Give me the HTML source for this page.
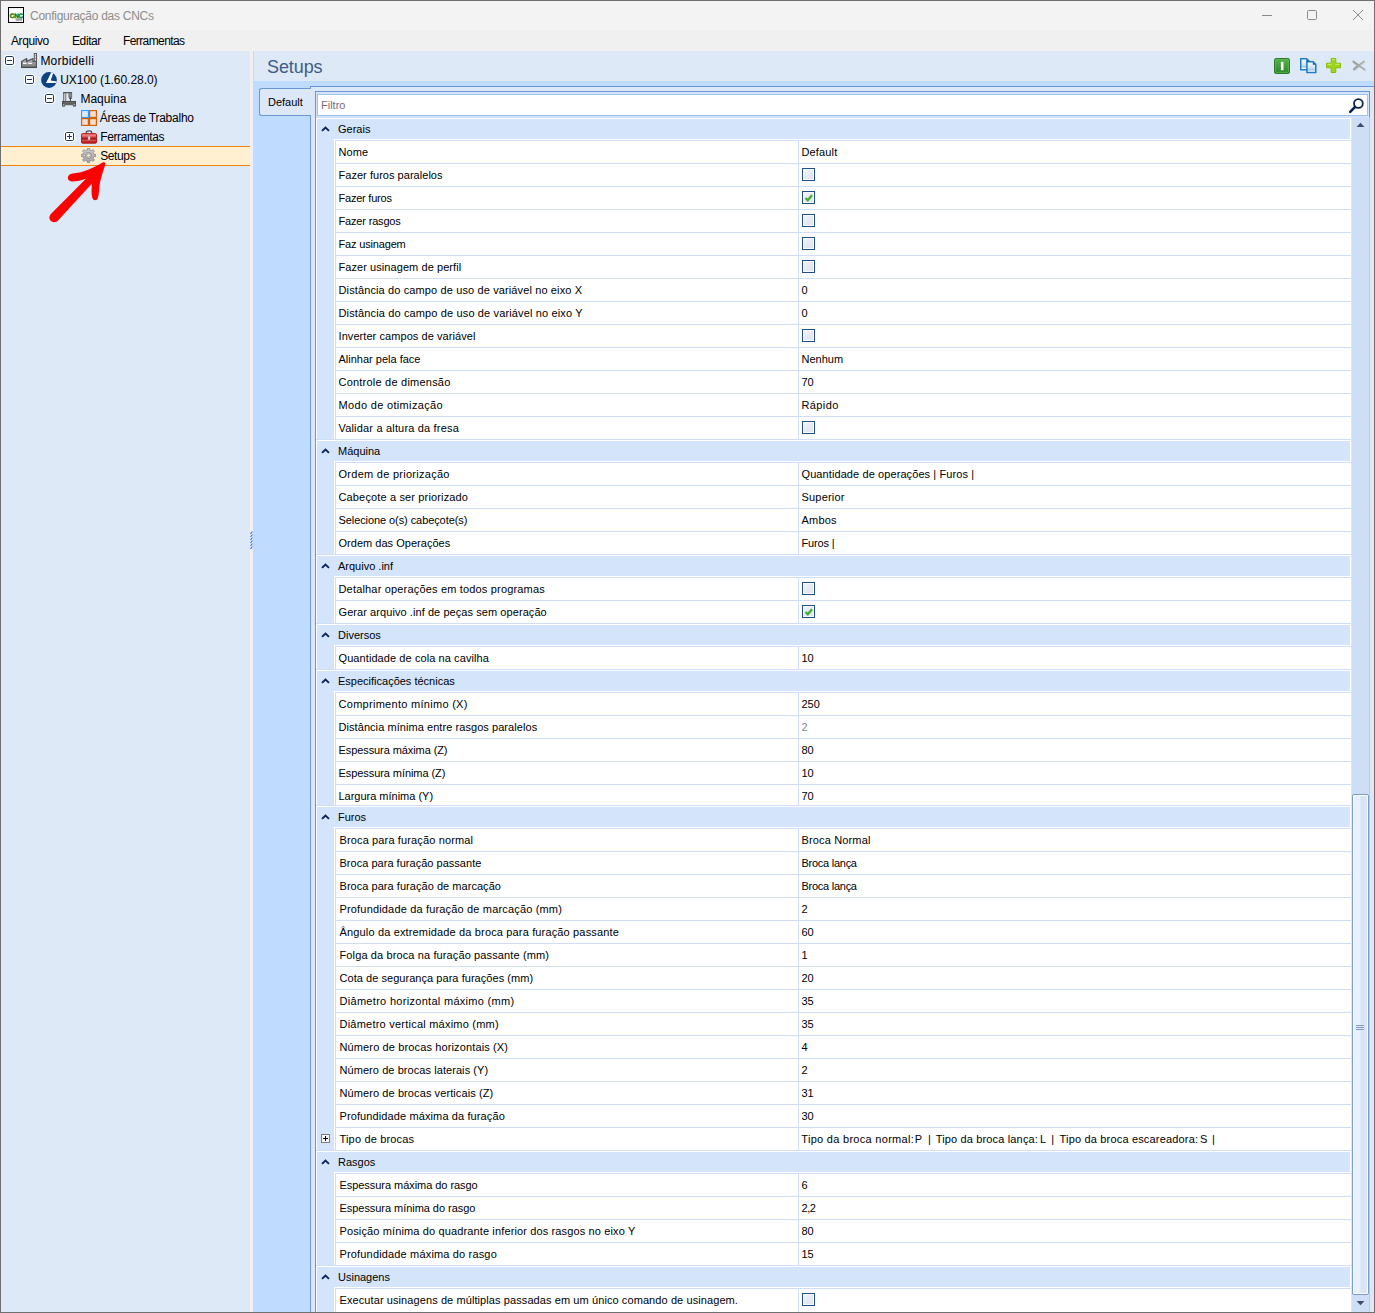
<!DOCTYPE html>
<html lang="pt-BR">
<head>
<meta charset="utf-8">
<title>Configuração das CNCs</title>
<style>
*{box-sizing:border-box;margin:0;padding:0}
html,body{width:1375px;height:1313px;overflow:hidden;background:#f0f0f0}
body{position:relative;font-family:"Liberation Sans",sans-serif;font-size:12px;color:#000}
.abs{position:absolute}
#win{position:absolute;left:0;top:0;width:1375px;height:1313px;border:1px solid #6f6f6f;}
#title{position:absolute;left:1px;top:1px;width:1373px;height:30px;background:#f3f3f3}
#title .tt{position:absolute;left:29px;top:0;line-height:30px;font-size:12px;color:#8d8d8d;letter-spacing:-0.27px;white-space:nowrap}
#menu{position:absolute;left:1px;top:31px;width:1373px;height:20px;background:#f0f0f0}
#menu span{position:absolute;top:0;line-height:21px;font-size:12px;letter-spacing:-0.4px;white-space:nowrap}
#tree{position:absolute;left:1px;top:51px;width:249px;height:1261px;background:#dde9f7}
.tn{position:absolute;left:0;width:249px;height:19px;line-height:19px;white-space:nowrap;font-size:12px}
.tn .tx{position:absolute;top:1px}
.tn svg{position:absolute}
.sel{background:#fff0d2;border-top:1px solid #f5820f;border-bottom:1px solid #f5820f;height:20px}
.sel .tx{top:0}
#split{position:absolute;left:250px;top:51px;width:3px;height:1261px;background:#f0f0f0}
#right{position:absolute;left:253px;top:51px;width:1121px;height:1261px;background:#bfdbff}
#hdr{position:absolute;left:1px;top:0;width:1120px;height:30px;background:#dde9f7}
#hdr .h1{position:absolute;left:13px;top:1px;line-height:31px;font-size:18px;color:#3f5c85;letter-spacing:-0.1px}
#tabpanel{position:absolute;left:57px;top:35px;width:1064px;height:1226px;background:#dce8f7;border-left:1px solid #6a98d6;border-top:1px solid #6a98d6}
#tab{position:absolute;left:6px;top:37px;width:52px;height:28px;background:#dce8f7;border:1px solid #6a98d6;border-right:none;border-radius:3px 0 0 3px;font-size:11px;line-height:26px;padding-left:8px}
#tabcover{position:absolute;left:57px;top:38px;width:1px;height:26px;background:#dce8f7}
#gridbox{position:absolute;left:315px;top:91px;width:1055px;height:1221px;border-left:1px solid #6a98d6;border-top:1px solid #6a98d6;border-right:1px solid #6a98d6;background:#d4e5fb}
#gridwhite{position:absolute;left:316px;top:118px;width:1035px;height:1194px;background:#fff}
#indent{position:absolute;left:317px;top:119px;width:17px;height:1193px;background:#d4e5fb}
#vline1{position:absolute;left:335px;top:140px;width:1px;height:1172px;background:#cfdef4}
#vline2{position:absolute;left:798px;top:140px;width:1px;height:1172px;background:#cfdef4}
#filter{position:absolute;left:317px;top:94px;width:1051px;height:22px;border:1px solid #a3c0e8;background:#fff}
#filter span{position:absolute;left:3px;top:0;line-height:20px;font-size:11px;color:#7b6a78}
.gh{position:absolute;left:316px;width:1035px;height:23px;background:#fff;border-top:1px solid #cfdef4}
.gh::before{content:"";position:absolute;left:1px;top:1px;width:1033px;height:20px;background:#d4e5fb}
.gh::after{content:"";position:absolute;left:1px;top:21px;width:17px;height:1px;background:#d4e5fb}
.gh .ht{position:absolute;left:22px;top:1px;line-height:20px;font-size:11px;white-space:nowrap}
.gh .chev{position:absolute;left:5px;top:7px}
.gr{position:absolute;left:335px;width:1016px;border-top:1px solid #cfdef4;font-size:11px;line-height:22px;white-space:nowrap}
.gr .lt{position:absolute;left:3.5px;top:0}
.gb .lt{left:4.5px}
.gr .vt{position:absolute;left:466.5px;top:0}
.gr .dim{color:#7f8791}
.gr .cb{position:absolute;left:467px;top:4px;width:13px;height:13px;border:1px solid #1f4e8c;background:linear-gradient(135deg,#f6f7fa 0%,#e6e9f0 50%,#dfe3ec 100%);box-shadow:inset 0 0 0 1px #fbfcfe}
.gr .cb svg{position:absolute;left:0;top:0}
.gr .plus{position:absolute;left:-14px;top:6px;width:9px;height:9px}
.gr .plus svg{position:absolute;left:0;top:0}
.gr .tp0{left:466.3px;letter-spacing:0.295px}
.gr .tp1{left:579.8px;letter-spacing:0.000px}
.gr .tp2{left:593.0px;letter-spacing:0.000px}
.gr .tp3{left:600.7px;letter-spacing:0.154px}
.gr .tp4{left:704.9px;letter-spacing:0.000px}
.gr .tp5{left:716.2px;letter-spacing:0.000px}
.gr .tp6{left:724.6px;letter-spacing:0.171px}
.gr .tp7{left:865.0px;letter-spacing:0.000px}
.gr .tp8{left:876.9px;letter-spacing:0.000px}
#sb{position:absolute;left:1352px;top:117px;width:17px;height:1195px;background:#cedef5}
#sbl{position:absolute;left:1351px;top:117px;width:1px;height:1195px;background:#dbe7f9}
#thumb{position:absolute;left:1352px;top:794px;width:17px;height:501px;border:1px solid #7d9bc7;border-radius:2px;background:linear-gradient(90deg,#fff 0,#fff 1px,#e8f0fb 1px,#e8f0fb 7px,#d7e4f6 8px,#dbe7f7 14px,#fff 14px,#fff 15px);box-shadow:inset 0 0 0 1px #fff}
#grip{position:absolute;left:1356px;top:1025px;width:8px;height:5px;background:linear-gradient(#7d9bc7 0,#7d9bc7 1px,transparent 1px,transparent 2px,#7d9bc7 2px,#7d9bc7 3px,transparent 3px,transparent 4px,#7d9bc7 4px,#7d9bc7 5px)}
#rightedge{position:absolute;left:1369px;top:117px;width:1px;height:1195px;background:#b4cdef}
#rmargin{position:absolute;left:1370px;top:87px;width:4px;height:1225px;background:#dce8f7}
</style>
</head>
<body>
<div id="title">
<svg class="abs" style="left:7px;top:6px" width="16" height="16" viewBox="0 0 16 16" text-rendering="geometricPrecision"><rect x="0.5" y="0.5" width="15" height="15" fill="#f2f2f2" stroke="#000"/><rect x="2" y="2" width="12" height="12" fill="#fcfcfc"/><text x="1.7" y="10.9" font-family="Liberation Sans, sans-serif" font-weight="bold" font-size="6.4" fill="#007d00" stroke="#007d00" stroke-width="0.35" letter-spacing="-0.15">CNC</text><rect x="7.6" y="11.3" width="6.4" height="2.4" fill="#8d8d8d" opacity="0.85"/><rect x="12.6" y="9.6" width="1.6" height="2" fill="#777" opacity="0.7"/></svg>
<span class="tt">Configuração das CNCs</span>
<svg class="abs" style="left:1261px;top:9px" width="11" height="11" viewBox="0 0 11 11"><path d="M0 5.5H10" stroke="#8a8a8a" stroke-width="1"/></svg>
<svg class="abs" style="left:1306px;top:9px" width="11" height="11" viewBox="0 0 11 11"><rect x="0.5" y="0.5" width="9" height="9" rx="1" fill="none" stroke="#8a8a8a"/></svg>
<svg class="abs" style="left:1352px;top:9px" width="11" height="11" viewBox="0 0 11 11"><path d="M0 0L10 10M10 0L0 10" stroke="#8a8a8a" stroke-width="1"/></svg>
</div>
<div id="menu"><span style="left:10px">Arquivo</span><span style="left:71px">Editar</span><span style="left:122px;letter-spacing:-0.6px">Ferramentas</span></div>
<div id="tree">
<div class="tn" style="top:0px"><svg style="left:3px;top:4px" width="11" height="11" viewBox="0 0 11 11"><rect x="0" y="0" width="11" height="11" rx="2.5" fill="#fff"/><rect x="1.5" y="1.5" width="8" height="8" rx="1.3" fill="#fff" stroke="#1d3768" stroke-width="1"/><path d="M3 5.5H8" stroke="#1d3768" stroke-width="1"/></svg><svg style="left:20px;top:2px" width="16" height="16" viewBox="0 0 16 16"><defs><linearGradient id="fg" x1="0" y1="0" x2="0" y2="1"><stop offset="0" stop-color="#bdbdbd"/><stop offset="1" stop-color="#7a7a7a"/></linearGradient></defs><rect x="13.3" y="0.5" width="2.2" height="9" fill="#ececec" stroke="#5a5a5a" stroke-width="1"/><path d="M13.8 2.8H15M13.8 5.3H15" stroke="#777" stroke-width="0.9"/><path d="M0.6 14.3V8.5L5.7 5.5V8.4L12 5.5V8.4H15.4V14.3Z" fill="url(#fg)" stroke="#555" stroke-width="1.2" stroke-linejoin="round"/><path d="M2 10.3H5.5M7.1 10.3H10.9" stroke="#fff" stroke-width="1.2"/><path d="M0.2 14.5H15.9" stroke="#4a4a4a" stroke-width="1.1"/></svg><span class="tx" style="left:39.4px;letter-spacing:0.23px">Morbidelli</span></div>
<div class="tn" style="top:19px"><svg style="left:23px;top:4px" width="11" height="11" viewBox="0 0 11 11"><rect x="0" y="0" width="11" height="11" rx="2.5" fill="#fff"/><rect x="1.5" y="1.5" width="8" height="8" rx="1.3" fill="#fff" stroke="#1d3768" stroke-width="1"/><path d="M3 5.5H8" stroke="#1d3768" stroke-width="1"/></svg><svg style="left:40px;top:2px" width="16" height="16" viewBox="0 0 16 16"><defs><clipPath id="uc"><circle cx="8" cy="8" r="7.9"/></clipPath></defs><circle cx="8" cy="8" r="7.9" fill="#0c4380"/><path clip-path="url(#uc)" d="M10.7 -0.5L12.7 -0.5L11.9 2.1L9.7 8.6L16.5 9.7V10.9H5Z" fill="#fff"/></svg><span class="tx" style="left:59.2px;letter-spacing:-0.04px">UX100 (1.60.28.0)</span></div>
<div class="tn" style="top:38px"><svg style="left:43px;top:4px" width="11" height="11" viewBox="0 0 11 11"><rect x="0" y="0" width="11" height="11" rx="2.5" fill="#fff"/><rect x="1.5" y="1.5" width="8" height="8" rx="1.3" fill="#fff" stroke="#1d3768" stroke-width="1"/><path d="M3 5.5H8" stroke="#1d3768" stroke-width="1"/></svg><svg style="left:61px;top:3px" width="14" height="15" viewBox="0 0 14 15"><path d="M1 0.6H10" stroke="#555" stroke-width="1.2"/><rect x="1.4" y="1" width="2.4" height="8.6" fill="#c4c4c4" stroke="#666" stroke-width="0.8"/><rect x="6.9" y="1" width="2.8" height="4.2" fill="#8f8f8f" stroke="#5f5f5f" stroke-width="0.8"/><path d="M8.4 5.2V9.4M7.2 6.4H9.7" stroke="#444" stroke-width="1"/><rect x="0.5" y="9.5" width="13" height="2.6" fill="#6d6d6d" stroke="#4a4a4a" stroke-width="1"/><path d="M0.5 12V14.2H2.7V12.7H11.3V14.2H13.5V12" fill="#a5a5a5" stroke="#555" stroke-width="1"/></svg><span class="tx" style="left:79.4px;letter-spacing:0.00px">Maquina</span></div>
<div class="tn" style="top:57px"><svg style="left:80px;top:2px" width="16" height="16" viewBox="0 0 16 16"><rect x="8.6" y="0.6" width="6.8" height="6.8" fill="#f6dfd1" stroke="#d2620c" stroke-width="1.2"/><rect x="0.6" y="8.6" width="6.8" height="6.8" fill="#f6dfd1" stroke="#d2620c" stroke-width="1.2"/><rect x="8.6" y="8.6" width="6.8" height="6.8" fill="#f6dfd1" stroke="#d2620c" stroke-width="1.2"/><path d="M8 1V15M1 8H15" stroke="#d2620c" stroke-width="0.6"/><rect x="0.55" y="0.55" width="6.9" height="6.9" fill="#dcebfc" stroke="#3399ff" stroke-width="1.1"/></svg><span class="tx" style="left:98.8px;letter-spacing:-0.24px">Áreas de Trabalho</span></div>
<div class="tn" style="top:76px"><svg style="left:63px;top:4px" width="11" height="11" viewBox="0 0 11 11"><rect x="0" y="0" width="11" height="11" rx="2.5" fill="#fff"/><rect x="1.5" y="1.5" width="8" height="8" rx="1.3" fill="#fff" stroke="#1d3768" stroke-width="1"/><path d="M3 5.5H8M5.5 3V8" stroke="#1d3768" stroke-width="1"/></svg><svg style="left:80px;top:3px" width="16" height="14" viewBox="0 0 16 14"><defs><linearGradient id="tg" x1="0" y1="0" x2="0" y2="1"><stop offset="0" stop-color="#f07c7c"/><stop offset="0.45" stop-color="#e04848"/><stop offset="0.5" stop-color="#c62626"/><stop offset="1" stop-color="#b91c1c"/></linearGradient></defs><path d="M5.3 4.4V2.6Q5.3 0.8 8 0.8Q10.7 0.8 10.7 2.6V4.4" fill="none" stroke="#4d4d4d" stroke-width="1.3"/><rect x="0.5" y="3.6" width="15" height="9.6" rx="1" fill="url(#tg)" stroke="#b02323" stroke-width="1"/><path d="M1 5.6H15M1 10.6H15" stroke="#f4a0a0" stroke-width="0.6" opacity="0.7"/><path d="M0.8 8.1H15.2" stroke="#8f1717" stroke-width="0.9"/><rect x="7.1" y="6.4" width="1.9" height="3.4" fill="#e8e8e8" stroke="#a9a9a9" stroke-width="0.5"/></svg><span class="tx" style="left:99.2px;letter-spacing:-0.36px">Ferramentas</span></div>
<div class="tn sel" style="top:95px"><svg style="left:80px;top:1px" width="15" height="15" viewBox="0 0 15 15"><defs><linearGradient id="gg" x1="0" y1="0" x2="0" y2="1"><stop offset="0" stop-color="#d2d2d2"/><stop offset="1" stop-color="#a2a2a2"/></linearGradient></defs><path d="M6.34 2.12 L6.34 0.19 L8.66 0.19 L8.66 2.12 L10.48 2.88 L11.85 1.51 L13.49 3.15 L12.12 4.52 L12.88 6.34 L14.81 6.34 L14.81 8.66 L12.88 8.66 L12.12 10.48 L13.49 11.85 L11.85 13.49 L10.48 12.12 L8.66 12.88 L8.66 14.81 L6.34 14.81 L6.34 12.88 L4.52 12.12 L3.15 13.49 L1.51 11.85 L2.88 10.48 L2.12 8.66 L0.19 8.66 L0.19 6.34 L2.12 6.34 L2.88 4.52 L1.51 3.15 L3.15 1.51 L4.52 2.88Z" fill="url(#gg)" stroke="#8b8b8b" stroke-width="0.9" stroke-linejoin="round"/><circle cx="7.5" cy="7.5" r="3.1" fill="#c4c4c4" stroke="#8f8f8f" stroke-width="0.9"/><circle cx="7.5" cy="7.5" r="1.7" fill="#f6ead0" stroke="#9a9a9a" stroke-width="0.6"/></svg><span class="tx" style="left:99.2px;letter-spacing:-0.38px">Setups</span></div>
<svg class="abs" style="left:40px;top:104px" width="80" height="75" viewBox="40 155 80 75"><path d="M103.6 162.6 C104.6 163.2 104.4 164.6 103.9 166 C101.5 172.5 98.6 182 98.3 187.5 C98.1 191 97.7 196 96.6 198.6 C95.8 200.6 92.6 200.8 91.6 198.6 C90.4 195.6 90.4 188.5 91 183.6 L57 220.6 C54.6 223 50.6 222.4 49 220 C47.6 217.6 48.6 215 50.6 213.2 L85.2 178.4 C80.6 180.4 74.6 181.6 70.6 181.4 C66.6 181.2 65.6 176.8 68.6 174.6 C70.6 173.2 75.6 173.4 80.6 172 C88.6 169.8 96.6 165.6 101.4 162.8 C102.2 162.3 103 162.2 103.6 162.6Z" fill="#fe0000"/></svg>
</div>
<div id="split"><svg class="abs" style="left:0;top:480px" width="3" height="19" viewBox="0 0 3 19"><path d="M0.5 3L2.5 0.5M0.5 6L2.5 3.5M0.5 9L2.5 6.5M0.5 12L2.5 9.5M0.5 15L2.5 12.5M0.5 18L2.5 15.5" stroke="#1f6be0" stroke-width="1.1"/></svg></div>
<div id="right">
<div id="hdr"><span class="h1">Setups</span>
<svg class="abs" style="left:1020px;top:7px" width="16" height="16" viewBox="0 0 16 16"><defs><linearGradient id="gi" x1="0" y1="0" x2="0" y2="1"><stop offset="0" stop-color="#57b04a"/><stop offset="1" stop-color="#2c8a2b"/></linearGradient></defs><rect x="0.5" y="0.5" width="15" height="15" rx="1.6" fill="url(#gi)" stroke="#2a7c2a"/><rect x="1.5" y="1.5" width="13" height="13" rx="0.8" fill="none" stroke="#6cbd5f" stroke-width="0.7" opacity="0.7"/><rect x="6.9" y="3.8" width="2.6" height="8.4" fill="#fff"/></svg>
<svg class="abs" style="left:1046px;top:7px" width="17" height="16" viewBox="0 0 17 16"><defs><linearGradient id="pg" x1="0" y1="0" x2="0" y2="1"><stop offset="0" stop-color="#ffffff"/><stop offset="0.2" stop-color="#eaf3f9"/><stop offset="0.6" stop-color="#cfe2ee"/><stop offset="0.68" stop-color="#a6cde3"/><stop offset="0.8" stop-color="#b9d8e9"/><stop offset="0.86" stop-color="#ffffff"/><stop offset="1" stop-color="#ffffff"/></linearGradient></defs><path d="M0.7 0.7H6.6L9.3 3.4V11.7H0.7Z" fill="url(#pg)" stroke="#1f7cc4" stroke-width="1.5" stroke-linejoin="round"/><path d="M6.9 3.7H13.1L15.8 6.4V14.6H6.9Z" fill="url(#pg)" stroke="#1f7cc4" stroke-width="1.5" stroke-linejoin="round"/><path d="M6.3 0.9V3.7H9.1Z" fill="#1a5f9e"/><path d="M12.8 3.9V6.7H15.6Z" fill="#1a5f9e"/></svg>
<svg class="abs" style="left:1072px;top:7px" width="15" height="15" viewBox="0 0 15 15"><path d="M5.2 0.5H9.8V5.2H14.5V9.8H9.8V14.5H5.2V9.8H0.5V5.2H5.2Z" fill="#9fd41d" stroke="#86bb14" stroke-width="1" stroke-linejoin="round"/><path d="M6.2 1.6H8.8M1.6 6.3H5.6M9.4 6.3H13.4" stroke="#d6f07c" stroke-width="0.9"/></svg>
<svg class="abs" style="left:1097px;top:8px" width="16" height="13" viewBox="0 0 16 13"><path d="M2.6 3.2L13.6 10.8M13 2.6L3 10.6" stroke="#ccd2db" stroke-width="2" stroke-linecap="round" transform="translate(0.5,0.6)"/><path d="M2.4 2.6L7.5 6.4M3 10.2L7.5 6.4" stroke="#a3a3a3" stroke-width="2.2" stroke-linecap="round"/><path d="M7.5 6.4L13.6 10.4M7.5 6.4L13 2.2" stroke="#a9a9a9" stroke-width="1.4" stroke-linecap="round"/></svg>
</div>
<div id="tabpanel"></div>
<div id="tab">Default</div>
<div id="tabcover"></div>
</div>
<div id="rmargin"></div>
<div id="gridbox"></div>
<div id="filter"><span>Filtro</span>
<svg class="abs" style="left:1029px;top:2px" width="18" height="17" viewBox="0 0 18 17"><circle cx="11.4" cy="6.5" r="4.4" fill="none" stroke="#0c2451" stroke-width="1.8"/><path d="M8 10L3.2 14.8" stroke="#0c2451" stroke-width="2.6" stroke-linecap="round"/></svg>
</div>
<div id="gridwhite"></div>
<div id="indent"></div>
<div id="vline1"></div><div id="vline2"></div>
<div class="gh" style="top:117px"><svg class="chev" width="9" height="7" viewBox="0 0 9 7"><path d="M1.7 5.2 L4.5 2.5 L7.3 5.2" fill="none" stroke="#0b2560" stroke-width="1.9" stroke-linecap="square"/></svg><span class="ht">Gerais</span></div>
<div class="gr" style="top:140px;height:23px"><span class="lt" style="letter-spacing:0.067px">Nome</span><span class="vt" style="letter-spacing:0.150px">Default</span></div>
<div class="gr" style="top:163px;height:23px"><span class="lt" style="letter-spacing:0.035px">Fazer furos paralelos</span><span class="cb"></span></div>
<div class="gr" style="top:186px;height:23px"><span class="lt" style="letter-spacing:-0.220px">Fazer furos</span><span class="cb"><svg width="11" height="11" viewBox="0 0 11 11"><path d="M2.6 5.9 L4.8 8.3 L9 3.3" fill="none" stroke="#3fae2a" stroke-width="2.2"/></svg></span></div>
<div class="gr" style="top:209px;height:23px"><span class="lt" style="letter-spacing:-0.172px">Fazer rasgos</span><span class="cb"></span></div>
<div class="gr" style="top:232px;height:23px"><span class="lt" style="letter-spacing:-0.164px">Faz usinagem</span><span class="cb"></span></div>
<div class="gr" style="top:255px;height:23px"><span class="lt" style="letter-spacing:0.070px">Fazer usinagem de perfil</span><span class="cb"></span></div>
<div class="gr" style="top:278px;height:23px"><span class="lt" style="letter-spacing:0.124px">Distância do campo de uso de variável no eixo X</span><span class="vt">0</span></div>
<div class="gr" style="top:301px;height:23px"><span class="lt" style="letter-spacing:0.139px">Distância do campo de uso de variável no eixo Y</span><span class="vt">0</span></div>
<div class="gr" style="top:324px;height:23px"><span class="lt" style="letter-spacing:0.069px">Inverter campos de variável</span><span class="cb"></span></div>
<div class="gr" style="top:347px;height:23px"><span class="lt">Alinhar pela face</span><span class="vt">Nenhum</span></div>
<div class="gr" style="top:370px;height:23px"><span class="lt" style="letter-spacing:0.221px">Controle de dimensão</span><span class="vt">70</span></div>
<div class="gr" style="top:393px;height:23px"><span class="lt" style="letter-spacing:0.330px">Modo de otimização</span><span class="vt" style="letter-spacing:0.380px">Rápido</span></div>
<div class="gr" style="top:416px;height:23px"><span class="lt" style="letter-spacing:0.180px">Validar a altura da fresa</span><span class="cb"></span></div>
<div class="gh" style="top:439px"><svg class="chev" width="9" height="7" viewBox="0 0 9 7"><path d="M1.7 5.2 L4.5 2.5 L7.3 5.2" fill="none" stroke="#0b2560" stroke-width="1.9" stroke-linecap="square"/></svg><span class="ht">Máquina</span></div>
<div class="gr" style="top:462px;height:23px"><span class="lt" style="letter-spacing:0.274px">Ordem de priorização</span><span class="vt" style="letter-spacing:0.091px">Quantidade de operações | Furos |</span></div>
<div class="gr" style="top:485px;height:23px"><span class="lt" style="letter-spacing:0.146px">Cabeçote a ser priorizado</span><span class="vt" style="letter-spacing:0.186px">Superior</span></div>
<div class="gr" style="top:508px;height:23px"><span class="lt" style="letter-spacing:-0.080px">Selecione o(s) cabeçote(s)</span><span class="vt" style="letter-spacing:0.200px">Ambos</span></div>
<div class="gr" style="top:531px;height:23px"><span class="lt" style="letter-spacing:0.023px">Ordem das Operações</span><span class="vt" style="letter-spacing:-0.167px">Furos |</span></div>
<div class="gh" style="top:554px"><svg class="chev" width="9" height="7" viewBox="0 0 9 7"><path d="M1.7 5.2 L4.5 2.5 L7.3 5.2" fill="none" stroke="#0b2560" stroke-width="1.9" stroke-linecap="square"/></svg><span class="ht">Arquivo .inf</span></div>
<div class="gr" style="top:577px;height:23px"><span class="lt" style="letter-spacing:0.175px">Detalhar operações em todos programas</span><span class="cb"></span></div>
<div class="gr" style="top:600px;height:23px"><span class="lt" style="letter-spacing:0.071px">Gerar arquivo .inf de peças sem operação</span><span class="cb"><svg width="11" height="11" viewBox="0 0 11 11"><path d="M2.6 5.9 L4.8 8.3 L9 3.3" fill="none" stroke="#3fae2a" stroke-width="2.2"/></svg></span></div>
<div class="gh" style="top:623px"><svg class="chev" width="9" height="7" viewBox="0 0 9 7"><path d="M1.7 5.2 L4.5 2.5 L7.3 5.2" fill="none" stroke="#0b2560" stroke-width="1.9" stroke-linecap="square"/></svg><span class="ht">Diversos</span></div>
<div class="gr" style="top:646px;height:23px"><span class="lt" style="letter-spacing:0.085px">Quantidade de cola na cavilha</span><span class="vt">10</span></div>
<div class="gh" style="top:669px"><svg class="chev" width="9" height="7" viewBox="0 0 9 7"><path d="M1.7 5.2 L4.5 2.5 L7.3 5.2" fill="none" stroke="#0b2560" stroke-width="1.9" stroke-linecap="square"/></svg><span class="ht">Especificações técnicas</span></div>
<div class="gr" style="top:692px;height:23px"><span class="lt" style="letter-spacing:0.286px">Comprimento mínimo (X)</span><span class="vt">250</span></div>
<div class="gr" style="top:715px;height:23px"><span class="lt" style="letter-spacing:0.063px">Distância mínima entre rasgos paralelos</span><span class="vt dim">2</span></div>
<div class="gr" style="top:738px;height:23px"><span class="lt" style="letter-spacing:-0.084px">Espessura máxima (Z)</span><span class="vt">80</span></div>
<div class="gr" style="top:761px;height:23px"><span class="lt" style="letter-spacing:-0.068px">Espessura mínima (Z)</span><span class="vt">10</span></div>
<div class="gr" style="top:784px;height:21px"><span class="lt" style="letter-spacing:-0.012px">Largura mínima (Y)</span><span class="vt">70</span></div>
<div class="gh" style="top:805px"><svg class="chev" width="9" height="7" viewBox="0 0 9 7"><path d="M1.7 5.2 L4.5 2.5 L7.3 5.2" fill="none" stroke="#0b2560" stroke-width="1.9" stroke-linecap="square"/></svg><span class="ht">Furos</span></div>
<div class="gr gb" style="top:828px;height:23px"><span class="lt" style="letter-spacing:0.133px">Broca para furação normal</span><span class="vt" style="letter-spacing:0.145px">Broca Normal</span></div>
<div class="gr gb" style="top:851px;height:23px"><span class="lt" style="letter-spacing:0.023px">Broca para furação passante</span><span class="vt" style="letter-spacing:-0.260px">Broca lança</span></div>
<div class="gr gb" style="top:874px;height:23px"><span class="lt" style="letter-spacing:0.042px">Broca para furação de marcação</span><span class="vt" style="letter-spacing:-0.260px">Broca lança</span></div>
<div class="gr gb" style="top:897px;height:23px"><span class="lt" style="letter-spacing:0.167px">Profundidade da furação de marcação (mm)</span><span class="vt">2</span></div>
<div class="gr gb" style="top:920px;height:23px"><span class="lt" style="letter-spacing:0.153px">Ângulo da extremidade da broca para furação passante</span><span class="vt">60</span></div>
<div class="gr gb" style="top:943px;height:23px"><span class="lt" style="letter-spacing:0.121px">Folga da broca na furação passante (mm)</span><span class="vt">1</span></div>
<div class="gr gb" style="top:966px;height:23px"><span class="lt" style="letter-spacing:0.046px">Cota de segurança para furações (mm)</span><span class="vt">20</span></div>
<div class="gr gb" style="top:989px;height:23px"><span class="lt" style="letter-spacing:0.300px">Diâmetro horizontal máximo (mm)</span><span class="vt">35</span></div>
<div class="gr gb" style="top:1012px;height:23px"><span class="lt" style="letter-spacing:0.228px">Diâmetro vertical máximo (mm)</span><span class="vt">35</span></div>
<div class="gr gb" style="top:1035px;height:23px"><span class="lt" style="letter-spacing:0.129px">Número de brocas horizontais (X)</span><span class="vt">4</span></div>
<div class="gr gb" style="top:1058px;height:23px"><span class="lt" style="letter-spacing:0.068px">Número de brocas laterais (Y)</span><span class="vt">2</span></div>
<div class="gr gb" style="top:1081px;height:23px"><span class="lt" style="letter-spacing:0.093px">Número de brocas verticais (Z)</span><span class="vt">31</span></div>
<div class="gr gb" style="top:1104px;height:23px"><span class="lt" style="letter-spacing:0.111px">Profundidade máxima da furação</span><span class="vt">30</span></div>
<div class="gr gb" style="top:1127px;height:23px"><span class="plus"><svg width="9" height="9" viewBox="0 0 9 9"><rect x="0.5" y="0.5" width="8" height="8" fill="#f7f7f7" stroke="#7b7b7b"/><path d="M2 4.5H7M4.5 2V7" stroke="#000" stroke-width="1"/></svg></span><span class="lt" style="letter-spacing:0.169px">Tipo de brocas</span><span class="vt tp0">Tipo da broca normal:</span><span class="vt tp1">P</span><span class="vt tp2">|</span><span class="vt tp3">Tipo da broca lança:</span><span class="vt tp4">L</span><span class="vt tp5">|</span><span class="vt tp6">Tipo da broca escareadora:</span><span class="vt tp7">S</span><span class="vt tp8">|</span></div>
<div class="gh" style="top:1150px"><svg class="chev" width="9" height="7" viewBox="0 0 9 7"><path d="M1.7 5.2 L4.5 2.5 L7.3 5.2" fill="none" stroke="#0b2560" stroke-width="1.9" stroke-linecap="square"/></svg><span class="ht">Rasgos</span></div>
<div class="gr gb" style="top:1173px;height:23px"><span class="lt" style="letter-spacing:-0.050px">Espessura máxima do rasgo</span><span class="vt">6</span></div>
<div class="gr gb" style="top:1196px;height:23px"><span class="lt" style="letter-spacing:-0.046px">Espessura mínima do rasgo</span><span class="vt" style="letter-spacing:-0.400px">2,2</span></div>
<div class="gr gb" style="top:1219px;height:23px"><span class="lt" style="letter-spacing:0.131px">Posição mínima do quadrante inferior dos rasgos no eixo Y</span><span class="vt">80</span></div>
<div class="gr gb" style="top:1242px;height:23px"><span class="lt" style="letter-spacing:0.163px">Profundidade máxima do rasgo</span><span class="vt">15</span></div>
<div class="gh" style="top:1265px"><svg class="chev" width="9" height="7" viewBox="0 0 9 7"><path d="M1.7 5.2 L4.5 2.5 L7.3 5.2" fill="none" stroke="#0b2560" stroke-width="1.9" stroke-linecap="square"/></svg><span class="ht">Usinagens</span></div>
<div class="gr gb" style="top:1288px;height:23px"><span class="lt" style="letter-spacing:0.090px">Executar usinagens de múltiplas passadas em um único comando de usinagem.</span><span class="cb"></span></div>
<div id="sbl"></div><div id="sb"></div><div id="rightedge"></div>
<svg class="abs" style="left:1356px;top:122px" width="9" height="6" viewBox="0 0 9 6"><path d="M0.6 5L4.5 0.8L8.4 5Z" fill="#444c6b"/></svg>
<svg class="abs" style="left:1356px;top:1300px" width="9" height="6" viewBox="0 0 9 6"><path d="M0.6 1L4.5 5.2L8.4 1Z" fill="#444c6b"/></svg>
<div id="thumb"></div><div id="grip"></div>
<div id="win"></div>
</body>
</html>
